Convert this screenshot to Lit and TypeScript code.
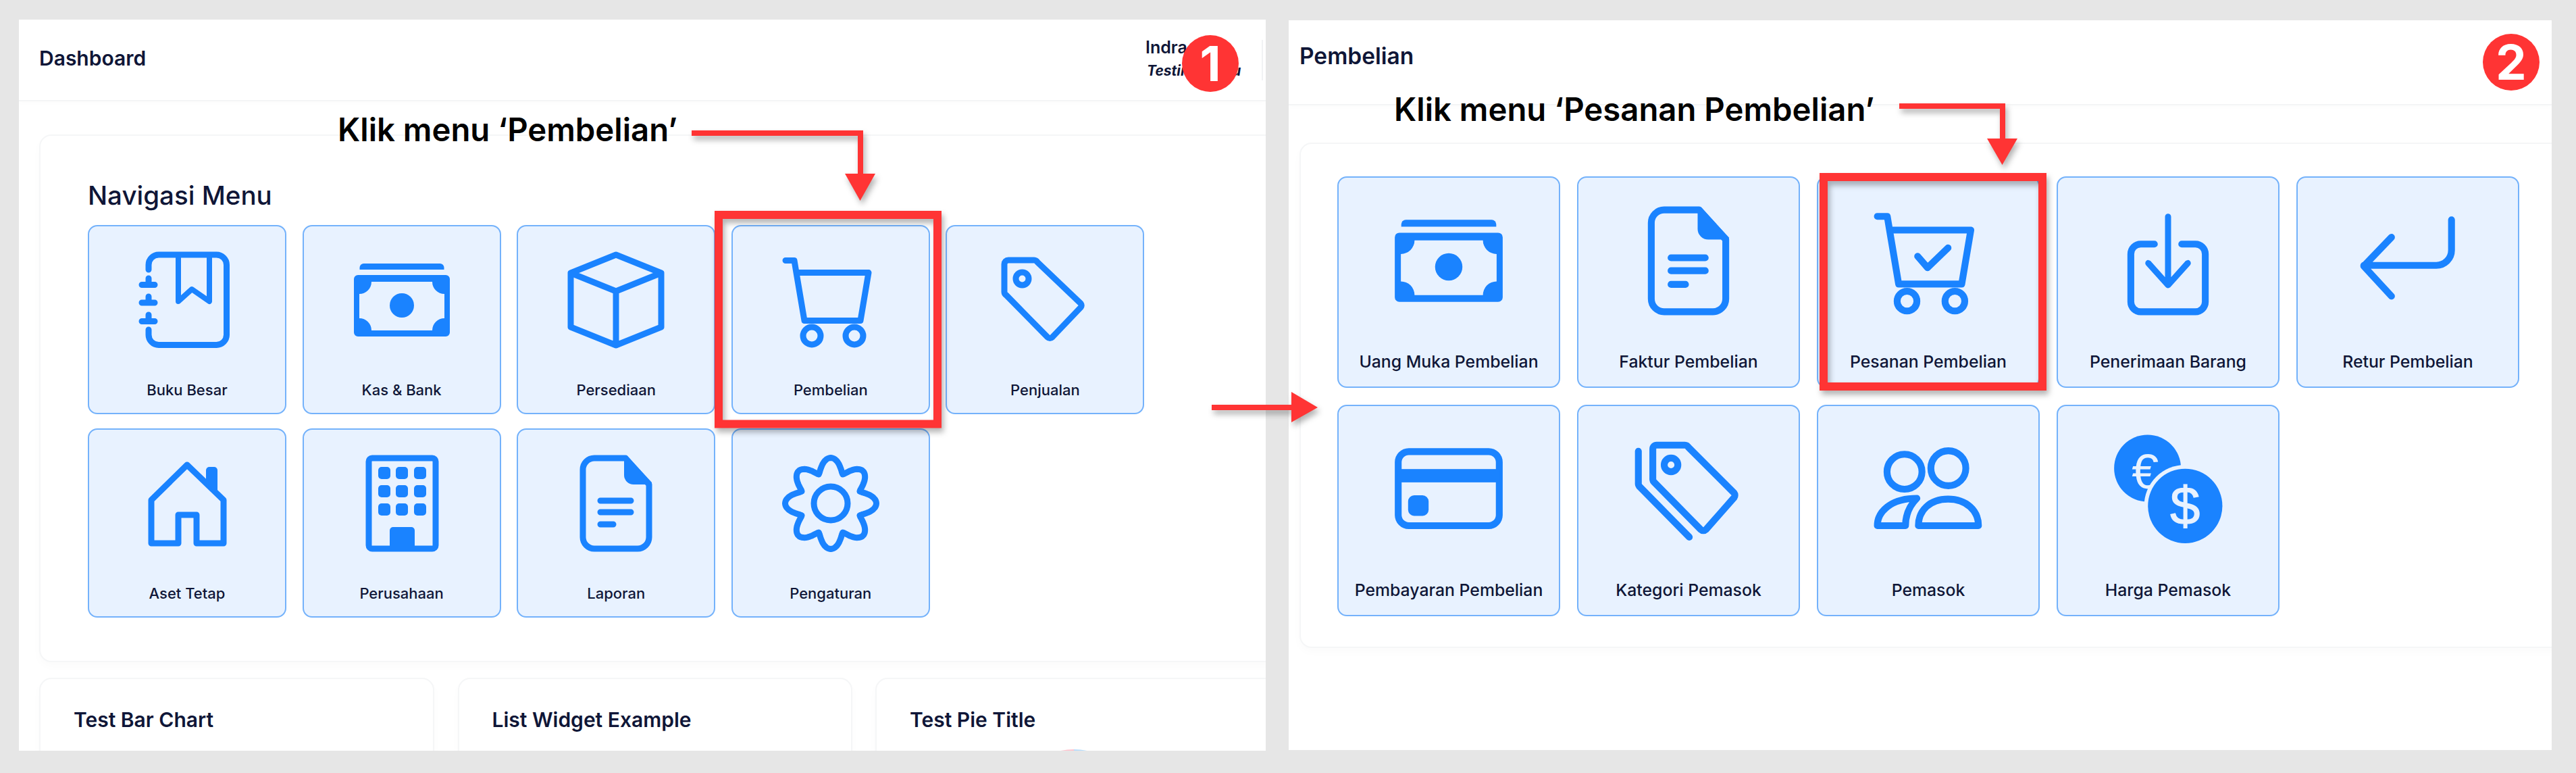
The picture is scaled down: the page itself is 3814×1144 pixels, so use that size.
import { LitElement, css, html, svg } from 'lit'
import { customElement } from 'lit/decorators.js'

// wavy outline of the settings icon, 8 lobes round the centre of a 160 box
function gearPath() {
  const pts: string[] = []
  for (let i = 0; i < 240; i++) {
    const a = (i / 240) * Math.PI * 2
    const r = 46.5 + 21 * Math.pow((1 + Math.cos(8 * a)) / 2, 0.65)
    pts.push(`${(80 + r * Math.sin(a)).toFixed(1)} ${(80 - r * Math.cos(a)).toFixed(1)}`)
  }
  return `M${pts.join('L')}Z`
}

const ICONS: Record<string, unknown> = {
  book: svg`
    <path class="s" d="M23 35V28a15 15 0 0 1 15-15h85.500a15 15 0 0 1 15 15v103.500a15 15 0 0 1-15 15H38a15 15 0 0 1-15-15V124"/>
    <path class="s t" d="M67 13v69l20-18 26 18V13"/>
    <path class="s" d="M13 57.500h19M23 48v9M13 84h19M23 75v9M13 111.500h19M23 102v9"/>`,
  money: svg`
    <path class="f" d="M17.500 35v-3a6 6 0 0 1 6-6h113a6 6 0 0 1 6 6v3z"/>
    <path class="f" fill-rule="evenodd" d="M15 43h130a6 6 0 0 1 6 6v79a6 6 0 0 1-6 6H15a6 6 0 0 1-6-6V49a6 6 0 0 1 6-6zM35 53H125A18 18 0 0 0 143 71V107A18 18 0 0 0 125 125H35A18 18 0 0 0 17 107V71A18 18 0 0 0 35 53Z"/>
    <circle class="f" cx="80" cy="88" r="18"/>`,
  box: svg`<path class="s" d="M80 13l67 27v80l-67 27-67-27V40zM13 40l67 27 67-27M80 67v80"/>`,
  cart: svg`
    <path class="s" d="M13 21.500h13l3 18 12 71h83l12-71H29"/>
    <circle class="s" cx="52" cy="133" r="13"/>
    <circle class="s" cx="115" cy="133" r="13"/>`,
  cartCheck: svg`
    <path class="s" d="M13 21.500h13l3 18 12 71h83l12-71H29"/>
    <circle class="s" cx="52" cy="133" r="13"/>
    <circle class="s" cx="115" cy="133" r="13"/>
    <path class="s" d="M66 74l13 15 27-26"/>`,
  tag: svg`
    <path class="s" d="M26 21h38a6 6 0 0 1 5 3l64 61a5 5 0 0 1 0 6l-42 44a5 5 0 0 1-7 0L23 73a6 6 0 0 1-3-5V27a6 6 0 0 1 6-6z"/>
    <circle class="s" cx="46.500" cy="48.500" r="9.500"/>`,
  house: svg`
    <path class="s" d="M67 139V97h27v42h40V75L80 23 27 75v64z"/>
    <path class="f" d="M108 31a5 5 0 0 1 5-5h7a5 5 0 0 1 5 5v35l-17-16z"/>`,
  building: svg`
    <rect class="s" x="31" y="13" width="99" height="134" rx="5"/>
    <rect class="f" x="45" y="26" width="18" height="18" rx="5"/>
    <rect class="f" x="71" y="26" width="18" height="18" rx="5"/>
    <rect class="f" x="98" y="26" width="18" height="18" rx="5"/>
    <rect class="f" x="45" y="53" width="18" height="18" rx="5"/>
    <rect class="f" x="71" y="53" width="18" height="18" rx="5"/>
    <rect class="f" x="98" y="53" width="18" height="18" rx="5"/>
    <rect class="f" x="45" y="80" width="18" height="18" rx="5"/>
    <rect class="f" x="71" y="80" width="18" height="18" rx="5"/>
    <rect class="f" x="98" y="80" width="18" height="18" rx="5"/>
    <path class="f" d="M62 120a5 5 0 0 1 5-5h27a5 5 0 0 1 5 5v27H62z"/>`,
  doc: svg`
    <path class="s" d="M48 13h46l35 39v78a17 17 0 0 1-17 17H48a17 17 0 0 1-17-17V30a17 17 0 0 1 17-17z"/>
    <path class="f" d="M92 9h4l37 40v3h-27a14 14 0 0 1-14-14z"/>
    <path class="s" d="M57 76h45M57 93h45M57 111h19"/>`,
  gear: svg`
    <path class="s" d=${gearPath()}/>
    <circle class="s" cx="80" cy="80" r="25"/>`,
  receive: svg`
    <path class="s" d="M62 58H44a13 13 0 0 0-13 13v63a13 13 0 0 0 13 13h72a13 13 0 0 0 13-13V71a13 13 0 0 0-13-13H98"/>
    <path class="s t" d="M80 22v88M54 83l26 29 26-29"/>`,
  retur: svg`<path class="s" d="M137.500 26v40a20 20 0 0 1-20 20H22M58.500 49L22 87l36.500 39.500"/>`,
  card: svg`
    <rect class="s" x="13.500" y="30.500" width="133" height="97.500" rx="14"/>
    <rect class="f" x="13" y="53.500" width="134" height="17.500"/>
    <rect class="f" x="26.500" y="88" width="27" height="27" rx="8"/>`,
  tags: svg`
    <path class="s" d="M38 22h37a6 6 0 0 1 5 3l60 60a5 5 0 0 1 0 6l-37 42a5 5 0 0 1-7 0L35 71a6 6 0 0 1-2-5V27a5 5 0 0 1 5-5z"/>
    <circle class="s" cx="57" cy="48" r="9"/>
    <path class="s" d="M14 30v42a6 6 0 0 0 2 5l65 66"/>`,
  people: svg`
    <circle class="s" cx="48.700" cy="57" r="23"/>
    <circle class="s" cx="106.400" cy="52.400" r="23"/>
    <path class="s" d="M13 128c0-18 17-36 52-36-10 10-15 23-15 36z"/>
    <path class="s" d="M67 128c0-20 15-35 39-35s40 15 40 35z"/>`,
  coins: svg`
    <circle class="f" cx="53" cy="52.500" r="44"/>
    <text class="coin euro" x="50" y="79">€</text>
    <circle class="gap" cx="102.500" cy="102" r="54"/>
    <circle class="f" cx="102.500" cy="102" r="49"/>
    <text class="coin dollar" x="102.500" y="126">$</text>`,
}

type Tile = { label: string; icon: string }

const MAIN_MENU: Tile[] = [
  { label: 'Buku Besar', icon: 'book' },
  { label: 'Kas & Bank', icon: 'money' },
  { label: 'Persediaan', icon: 'box' },
  { label: 'Pembelian', icon: 'cart' },
  { label: 'Penjualan', icon: 'tag' },
  { label: 'Aset Tetap', icon: 'house' },
  { label: 'Perusahaan', icon: 'building' },
  { label: 'Laporan', icon: 'doc' },
  { label: 'Pengaturan', icon: 'gear' },
]

const PURCHASE_MENU: Tile[] = [
  { label: 'Uang Muka Pembelian', icon: 'money' },
  { label: 'Faktur Pembelian', icon: 'doc' },
  { label: 'Pesanan Pembelian', icon: 'cartCheck' },
  { label: 'Penerimaan Barang', icon: 'receive' },
  { label: 'Retur Pembelian', icon: 'retur' },
  { label: 'Pembayaran Pembelian', icon: 'card' },
  { label: 'Kategori Pemasok', icon: 'tags' },
  { label: 'Pemasok', icon: 'people' },
  { label: 'Harga Pemasok', icon: 'coins' },
]

@customElement('app-root')
export class AppRoot extends LitElement {
  static styles = css`
    :host {
      display: block;
      position: relative;
      width: 3814px;
      height: 1144px;
      overflow: hidden;
      background: #e6e6e6;
      font-family: Inter, 'Liberation Sans', sans-serif;
      color: #0f1637;
    }

    .page {
      display: flex;
      gap: 34px;
      padding: 29px 0 0 28px;
    }

    .panel {
      flex: none;
      overflow: hidden;
      background: #fff;
    }

    .panel-one {
      width: 1846px;
      height: 1082px;
    }

    .panel-two {
      width: 1870px;
      height: 1080px;
      margin-top: 1px;
    }

    .topbar {
      display: flex;
      align-items: center;
      justify-content: space-between;
      box-sizing: border-box;
      border-bottom: 2px solid #f4f5f6;
      box-shadow: 0 3px 8px rgba(0, 0, 0, 0.015);
      font-weight: 600;
    }

    .panel-one .topbar {
      height: 121px;
      padding-left: 30px;
      font-size: 30px;
    }

    .panel-two .topbar {
      height: 126px;
      padding-left: 16px;
      font-size: 33.500px;
    }

    .panel-one .page-title {
      margin-bottom: 6px;
    }

    .panel-two .page-title {
      margin-bottom: 18px;
    }

    .user {
      display: flex;
      align-items: center;
      gap: 32px;
      padding-right: 4px;
    }

    .user-text {
      display: flex;
      flex-direction: column;
      gap: 9px;
      width: 140px;
      margin-top: -2px;
      font-size: 25px;
      line-height: 26px;
    }

    .user-role {
      padding-left: 2px;
      font-size: 21px;
      font-style: italic;
      font-weight: 700;
      white-space: nowrap;
    }

    .user-rule {
      width: 2px;
      height: 60px;
      background: #f1f2f4;
    }

    .card {
      box-sizing: border-box;
      border: 2px solid #f5f6f7;
      border-radius: 18px;
      background: #fff;
      box-shadow: 0 6px 14px rgba(0, 0, 0, 0.02);
    }

    .menu-card-one {
      width: 1880px;
      height: 781px;
      margin: 49px 0 0 30px;
      padding: 60px 0 0 70px;
    }

    .menu-card-two {
      width: 1900px;
      height: 748px;
      margin: 55px 0 0 16px;
      padding: 48px 0 0 54px;
    }

    .menu-title {
      height: 72px;
      font-size: 38.500px;
      font-weight: 500;
      line-height: 56px;
    }

    .tiles-one {
      display: grid;
      grid-template-columns: repeat(5, 294px);
      grid-auto-rows: 280px;
      gap: 21px 23.600px;
    }

    .tiles-two {
      display: grid;
      grid-template-columns: repeat(5, 330px);
      grid-auto-rows: 313px;
      gap: 25px;
    }

    .tile {
      display: flex;
      flex-direction: column;
      align-items: center;
      box-sizing: border-box;
      border: 2px solid #74b2fb;
      border-radius: 14px;
      background: #e8f2ff;
    }

    .tiles-one .tile {
      padding: 29px 0 19px;
    }

    .tiles-two .tile {
      padding: 33px 0 22px;
    }

    .tile svg {
      flex: none;
    }

    .tiles-one svg {
      width: 160px;
      height: 160px;
    }

    .tiles-two svg {
      width: 180px;
      height: 180px;
    }

    .tile span {
      margin-top: auto;
      font-size: 22px;
      font-weight: 500;
      line-height: 30px;
      white-space: nowrap;
    }

    .tiles-two .tile span {
      font-size: 24.800px;
    }

    .tile .s {
      fill: none;
      stroke: #1a83ff;
      stroke-width: 9;
      stroke-linecap: round;
      stroke-linejoin: round;
    }

    .tile .t {
      stroke-width: 8;
    }

    .tile .f {
      fill: #1a83ff;
    }

    .tile .gap {
      fill: #e8f2ff;
    }

    .tile .coin {
      fill: #e8f2ff;
      font-family: 'Liberation Sans', sans-serif;
      text-anchor: middle;
    }

    .tile .euro {
      font-size: 64px;
    }

    .tile .dollar {
      stroke: #e8f2ff;
      stroke-width: 1;
      font-size: 71px;
    }

    .widgets {
      display: grid;
      grid-template-columns: 585px 584px 620px;
      gap: 34.500px;
      margin: 23px 0 0 30px;
    }

    .widget {
      height: 180px;
      padding: 42px 0 0 49px;
      overflow: hidden;
      font-size: 30px;
      font-weight: 600;
      line-height: 36px;
    }

    .pie {
      display: block;
      width: 200px;
      height: 200px;
      margin: 26px 0 0 143px;
    }

    /* annotations lying over the screenshots */
    .marks {
      position: absolute;
      inset: 0;
      width: 3814px;
      height: 1144px;
      pointer-events: none;
    }

    .marks g {
      filter: drop-shadow(3px 6px 4px rgba(0, 0, 0, 0.3));
      fill: #ff3434;
    }

    .marks .frame {
      fill: none;
      stroke: #ff3434;
      stroke-width: 12;
    }

    .callout {
      position: absolute;
      color: #000;
      font-size: 47.300px;
      font-weight: 600;
      line-height: 58px;
      white-space: nowrap;
    }

    .callout-one {
      left: 500px;
      top: 163px;
    }

    .callout-two {
      left: 2064px;
      top: 133px;
    }

    .badge {
      position: absolute;
      width: 84px;
      height: 84px;
      border-radius: 50%;
      background: #ff3434;
      color: #fff;
      font-size: 72px;
      font-weight: 700;
      line-height: 84px;
      text-align: center;
    }

    .badge-one {
      left: 1750px;
      top: 52px;
    }

    .badge-two {
      left: 3676px;
      top: 50px;
    }
  `

  private tile(t: Tile) {
    return html`
      <div class="tile">
        <svg viewBox="0 0 160 160">${ICONS[t.icon]}</svg>
        <span>${t.label}</span>
      </div>
    `
  }

  render() {
    return html`
      <div class="page">
        <section class="panel panel-one">
          <header class="topbar">
            <div class="page-title">Dashboard</div>
            <div class="user">
              <div class="user-text">
                <div>Indra</div>
                <div class="user-role">Testing Menu</div>
              </div>
              <div class="user-rule"></div>
            </div>
          </header>
          <div class="card menu-card-one">
            <div class="menu-title">Navigasi Menu</div>
            <div class="tiles-one">${MAIN_MENU.map((t) => this.tile(t))}</div>
          </div>
          <div class="widgets">
            <div class="card widget">Test Bar Chart</div>
            <div class="card widget">List Widget Example</div>
            <div class="card widget">
              Test Pie Title
              <svg class="pie" viewBox="0 0 200 200">
                <path d="M100 0a100 100 0 0 0 0 200z" fill="#ffc2cd" />
                <path d="M100 0a100 100 0 0 1 0 200z" fill="#b5dcfb" />
              </svg>
            </div>
          </div>
        </section>
        <section class="panel panel-two">
          <header class="topbar"><div class="page-title">Pembelian</div></header>
          <div class="card menu-card-two">
            <div class="tiles-two">${PURCHASE_MENU.map((t) => this.tile(t))}</div>
          </div>
        </section>
      </div>

      <svg class="marks" viewBox="0 0 3814 1144">
        <g>
          <rect class="frame" x="1064" y="318" width="324" height="309.500" />
          <path d="M1024 193h254v64h18l-22.500 40-22.500-40h19v-56h-246z" />
        </g>
        <g>
          <rect class="frame" x="2700" y="262" width="324" height="310" />
          <path d="M2812 153h157v52h18l-22.500 39-22.500-39h19v-44h-149z" />
        </g>
        <g>
          <path d="M1794 599h118v-19l39 23-39 22v-18h-118z" />
        </g>
      </svg>

      <div class="callout callout-one">Klik menu ‘Pembelian’</div>
      <div class="callout callout-two">Klik menu ‘Pesanan Pembelian’</div>
      <div class="badge badge-one">1</div>
      <div class="badge badge-two">2</div>
    `
  }
}
